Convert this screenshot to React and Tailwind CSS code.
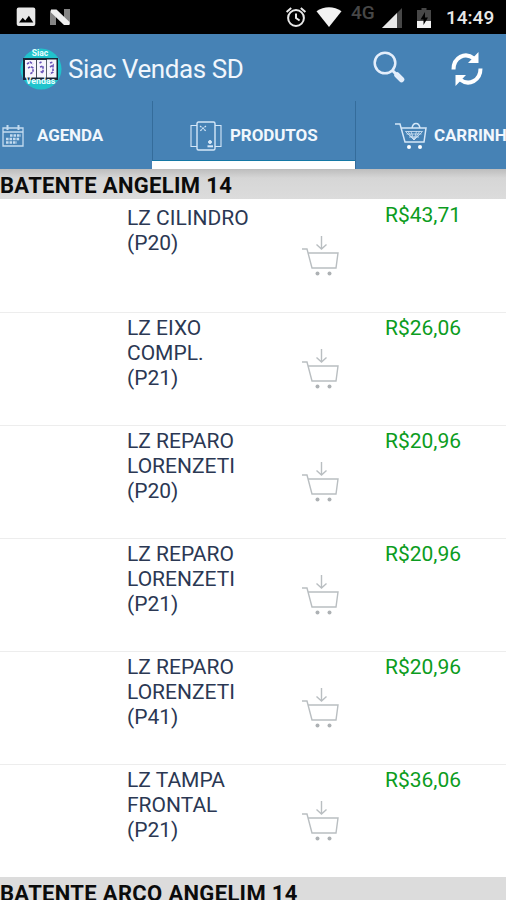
import React from 'react';

const products = [
  { id: 1, lines: ['LZ CILINDRO', '(P20)'], price: 'R$43,71' },
  { id: 2, lines: ['LZ EIXO', 'COMPL.', '(P21)'], price: 'R$26,06' },
  { id: 3, lines: ['LZ REPARO', 'LORENZETI', '(P20)'], price: 'R$20,96' },
  { id: 4, lines: ['LZ REPARO', 'LORENZETI', '(P21)'], price: 'R$20,96' },
  { id: 5, lines: ['LZ REPARO', 'LORENZETI', '(P41)'], price: 'R$20,96' },
  { id: 6, lines: ['LZ TAMPA', 'FRONTAL', '(P21)'], price: 'R$36,06' },
];

const StatusBar = () => (
  <div className="h-[34px] shrink-0 bg-black flex items-center pl-4 pr-[10px] text-[#e8e8e8]">
    <svg className="w-5 h-5" viewBox="0 0 20 20">
      <rect x="0.7" y="0.5" width="18.6" height="18.5" rx="2" fill="#e8e8e8" />
      <path d="M3 15.500l3.700-4.800 2.600 2.800 3.600-4.700 4.400 6.700z" fill="#000" />
    </svg>
    <svg className="w-[22px] h-[18px] ml-[13px]" viewBox="0 0 22 18">
      <path d="M1 2.500h6V17H1zM15 1h6v15h-6z" fill="#858585" />
      <path d="M2 1.500h5.500L20.500 14v3H15L2 4.500z" fill="#f0f0f0" />
    </svg>
    <svg className="w-[22px] h-[22px] ml-auto" viewBox="0 0 22 22" fill="none" stroke="#e8e8e8" strokeWidth="2">
      <circle cx="11" cy="12" r="7.9" />
      <path d="M11 7.500V12l3.600 2.500M1.600 6l4.600-3.900M15.800 2.100L20.400 6" />
    </svg>
    <svg className="w-[26px] h-5 ml-[9px]" viewBox="0 0 26 20">
      <path d="M0.500 4.200C8-1 18-1 25.500 4.200L13 20z" fill="#f2f2f2" />
    </svg>
    <span className="w-[25px] ml-[9px] -mt-2 text-[19px] leading-5 font-medium text-[#474747]">4G</span>
    <svg className="w-5 h-5 ml-[6px] mt-0.5" viewBox="0 0 20 20">
      <path d="M20 0v20H0z" fill="#474747" />
      <path d="M15 5v15H0z" fill="#e8e8e8" />
    </svg>
    <svg className="w-[14px] h-5 ml-[15px] mt-0.5" viewBox="0 0 14 20">
      <path d="M4.500 0h5v2H14v18H0V2h4.500z" fill="#474747" />
      <path d="M0 13h14v7H0z" fill="#f2f2f2" />
      <path d="M8 4L3.500 11.500h3V17l4.500-7.500H8z" fill="#000" />
    </svg>
    <span className="w-[50px] ml-[15px] text-[19px] leading-6 font-medium whitespace-nowrap mt-0.5">14:49</span>
  </div>
);

const Logo = () => (
  <svg className="w-[42px] h-[42px]" viewBox="0 0 42 42">
    <circle cx="21" cy="21" r="20.500" fill="#20c3cc" />
    <text x="20" y="8" textAnchor="middle" fontFamily="Roboto" fontSize="8.500" fontWeight="700" fill="#e8ffff">Siac</text>
    <rect x="3" y="10" width="35" height="22" fill="#172535" />
    <path d="M5 12h11v17.500H5zM16.800 12h9.500v17.500h-9.500zM27 11.500h9.500v18H27z" fill="#f7f5fc" />
    <path d="M7 16l3-2 3 2M8 20l3-1.500 2 1.500v4l-3 2M19.500 15l2-1M20 19l3-1v7l-3-2M30 15l3-1M30 19l3-2v7l-3 2" fill="none" stroke="#6651b6" strokeWidth="1.600" strokeDasharray="2.500 1" />
    <text x="20.500" y="36" textAnchor="middle" fontFamily="Roboto" fontSize="8.800" fontWeight="700" fill="#e8ffff">Vendas</text>
  </svg>
);

const AppBar = () => (
  <div className="h-[67px] shrink-0 flex items-center pl-5 pr-[23px] pt-0.5">
    <Logo />
    <h1 className="ml-[6px] mt-px text-[26px] leading-8 tracking-[-0.42px] text-[#f1f6fc] whitespace-nowrap">Siac Vendas SD</h1>
    <svg className="w-8 h-8 ml-auto -mt-1" viewBox="0 0 32 32" fill="none">
      <circle cx="12" cy="12" r="10.300" stroke="#e4eefb" strokeWidth="2.500" />
      <path d="M19.500 19.500l3 3" stroke="#e4eefb" strokeWidth="3" />
      <path d="M24 24l4.500 4.500" stroke="#e4eefb" strokeWidth="5.500" strokeLinecap="round" />
    </svg>
    <svg className="w-8 h-[34px] ml-[46px]" viewBox="0 0 32 34" fill="none">
      <path d="M2.500 17.500C2.500 5.500 14-0.500 23 6.500M29.500 16.500C29.500 28.500 18 34.500 9 27.500" stroke="#fff" strokeWidth="4" />
      <path d="M27.500 0v11H17zM4.500 34V23H15z" fill="#fff" />
    </svg>
  </div>
);

const CalendarIcon = () => (
  <svg className="w-[22px] h-[22px]" viewBox="0 0 22 22" fill="none" stroke="#c3dbf0">
    <path d="M1 3h20v18H1zM1 7h20" strokeWidth="1.300" />
    <path d="M5.500 0v5M16.500 0v5" strokeWidth="2" />
    <path d="M8 10.500h11M4 14h14M4 17.500h11" strokeWidth="2.400" strokeDasharray="2.600 0.900" />
  </svg>
);

const CardsIcon = () => (
  <svg className="w-8 h-[30px]" viewBox="0 0 32 30" fill="none" stroke="#d5e7f8" strokeWidth="1.400">
    <rect x="7" y="1" width="18" height="28" rx="1.500" />
    <path d="M7 4.500H1v21h6M25 4.500h6v21h-6" strokeWidth="1.100" />
    <path d="M10 5l6 5M16 5l-6 5" strokeWidth="1.100" strokeDasharray="2 0.700" />
    <circle cx="20" cy="21" r="1.500" fill="#d5e7f8" strokeWidth="1" />
    <path d="M17.500 25.300h5.500" strokeWidth="2" />
  </svg>
);

const BasketIcon = () => (
  <svg className="w-8 h-[28px]" viewBox="0 0 32 28" fill="none" stroke="#d5e7f8" strokeWidth="1.500">
    <path d="M0 2h5l5 18h19l2-14H6M17 6c1-6 7-6 8 0" />
    <path d="M10.500 9.500h17L19 18zM13 9.500l6 8.500 5.500-8.500M16 9.500l3 8.500 2.500-8.500M11.500 12h15M14 15h10" strokeWidth="0.800" />
    <circle cx="14" cy="25" r="2" fill="#fff" stroke="none" />
    <circle cx="25" cy="25" r="2" fill="#fff" stroke="none" />
  </svg>
);

const Tabs = () => (
  <nav className="h-[68px] shrink-0 flex overflow-hidden text-[17px] tracking-[-0.1px] font-bold text-[#f1f7fd] whitespace-nowrap">
    <button className="w-[153px] shrink-0 flex items-center pl-[2px] pt-[2px] border-r border-[#346c9b]">
      <CalendarIcon />
      <span className="ml-[13px]">AGENDA</span>
    </button>
    <button className="w-[203px] shrink-0 flex flex-col border-r border-[#346c9b]">
      <span className="flex items-center pl-[37px] h-[59px] w-full pt-[11px]">
        <CardsIcon />
        <span className="ml-2">PRODUTOS</span>
      </span>
      <span className="block -ml-px w-[203px] h-[9px] bg-white border-t border-[#1478a5]" />
    </button>
    <button className="w-[170px] shrink-0 flex items-center pl-[39px] pt-[2px]">
      <BasketIcon />
      <span className="ml-[7px]">CARRINHO</span>
    </button>
  </nav>
);

const AddToCartIcon = () => (
  <svg className="w-[38px] h-10" viewBox="0 0 38 40" fill="none" stroke="#b9bec1" strokeWidth="1.400">
    <path d="M20.500 0v13M15.500 8.500l5 4.500 5-4.500" />
    <path d="M1 13h5l5 19h24l2-15H7" />
    <circle cx="16.500" cy="37.500" r="2" fill="#adb1b4" stroke="none" />
    <circle cx="28.500" cy="37.500" r="2" fill="#adb1b4" stroke="none" />
  </svg>
);

const ProductRow = ({ product }) => (
  <li className="h-[113px] flex items-start border-b border-[#ededed] last:border-b-0 last:h-[112px]">
    <div className={`w-[174px] ml-[127px] text-[21px] leading-[25px] text-[#2b3853] ${product.id === 1 ? 'pt-[6px]' : 'pt-[3px]'}`}>
      {product.lines.map((line) => (
        <div key={line}>{line}</div>
      ))}
    </div>
    <button className="mt-[36px]">
      <AddToCartIcon />
    </button>
    <span className="ml-[46px] pt-[3px] text-[21px] leading-[25px] text-[#0b9c20]">{product.price}</span>
  </li>
);

const SectionHeader = ({ title, shadow }) => (
  <h2 className={`h-[30px] shrink-0 text-[22px] leading-[33px] font-bold tracking-[0.33px] text-[#0b0b0b] whitespace-nowrap ${shadow ? 'bg-linear-to-b from-[#bdbdbd] via-[#d6d6d6] via-30% to-[#dcdcdc]' : 'bg-[#dcdcdc]'}`}>
    {title}
  </h2>
);

const App = () => (
  <div className="w-[506px] h-[900px] overflow-hidden flex flex-col bg-white font-['Roboto',sans-serif]">
    <StatusBar />
    <header className="bg-[#4682b5] shrink-0">
      <AppBar />
      <Tabs />
    </header>
    <SectionHeader title="BATENTE ANGELIM 14" shadow />
    <ul className="shrink-0 pt-px">
      {products.map((product) => (
        <ProductRow key={product.id} product={product} />
      ))}
    </ul>
    <SectionHeader title="BATENTE ARCO ANGELIM 14" />
  </div>
);

export default App;
